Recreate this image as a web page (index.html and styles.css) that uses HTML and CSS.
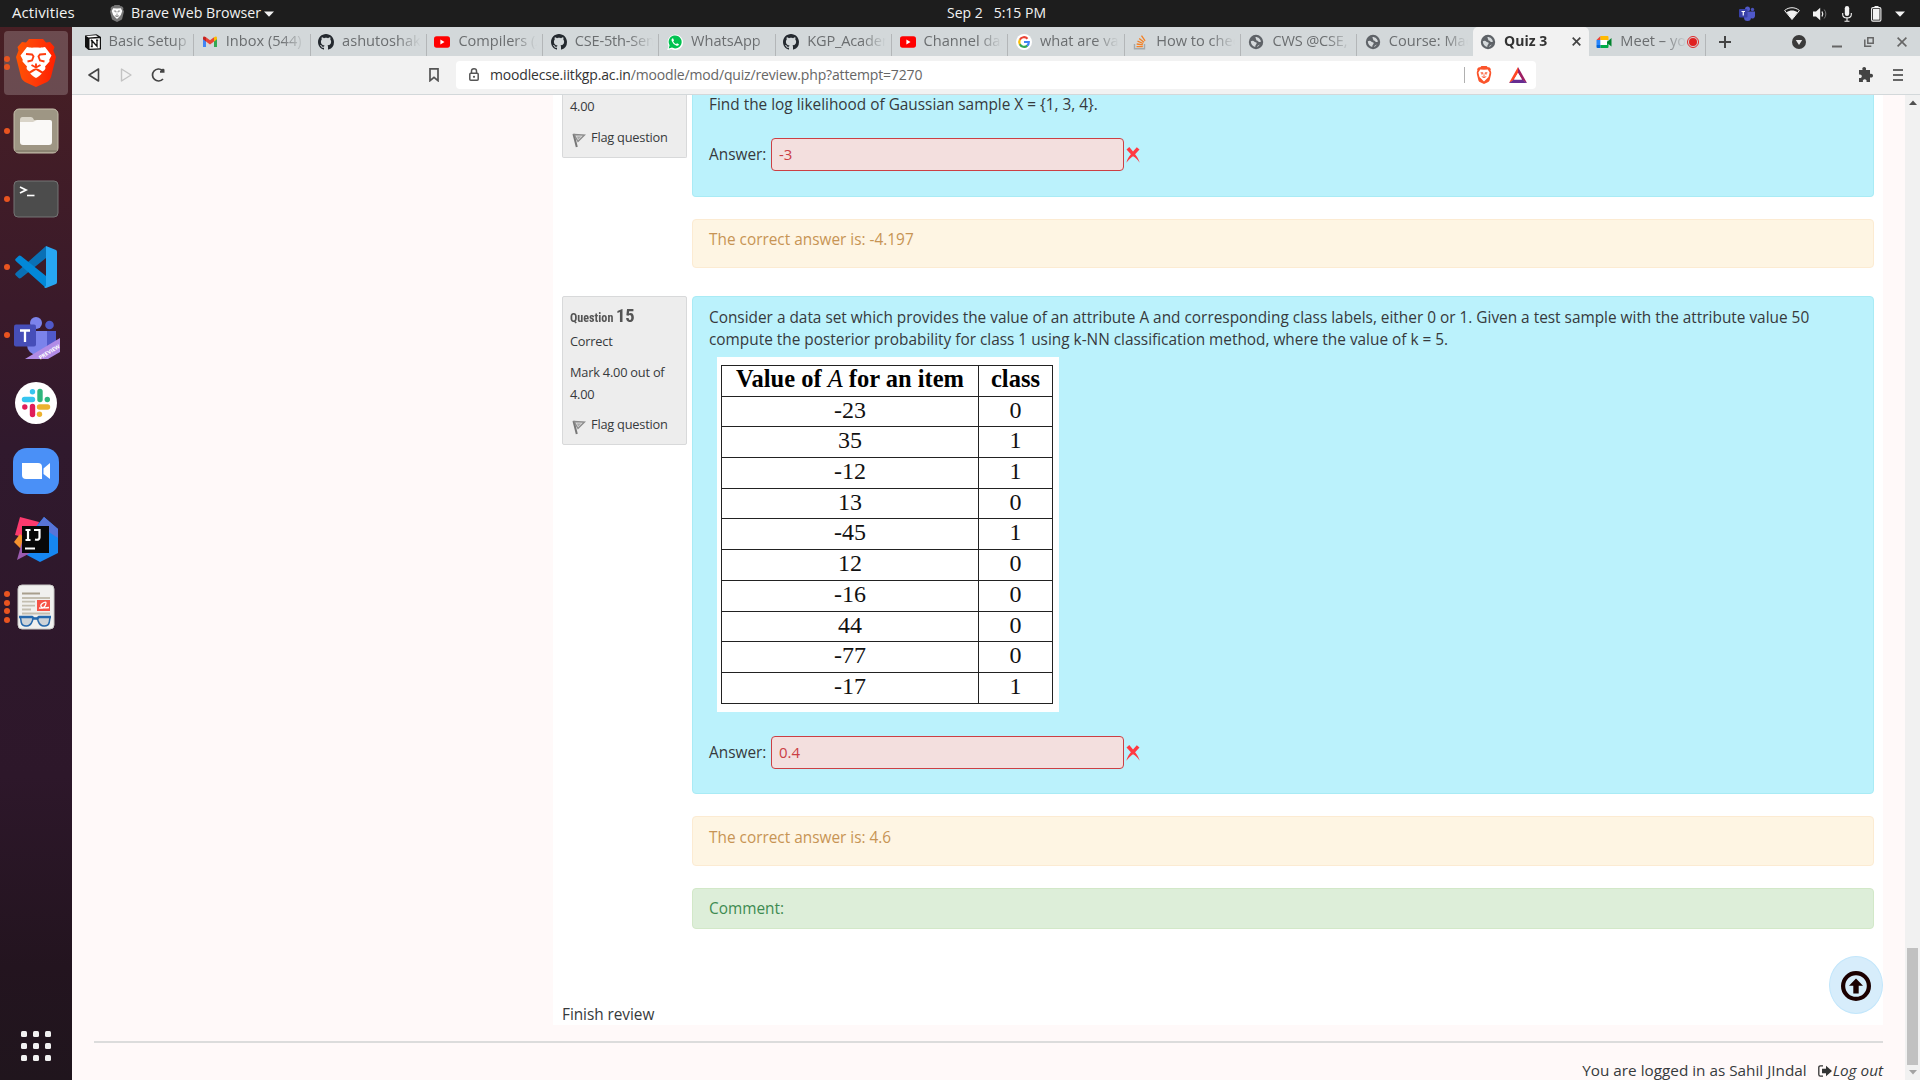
FILE: index.html
```html
<!DOCTYPE html>
<html lang="en">
<head>
<meta charset="utf-8">
<title>Quiz 3</title>
<link rel="stylesheet" href="styles.css">
</head>
<body>
<svg class="defs" width="0" height="0" aria-hidden="true">
  <defs>
    <linearGradient id="braveFill" x1="0" x2="1" y1="0.2" y2="0.3"><stop offset="0" stop-color="#ff5500"/><stop offset="0.45" stop-color="#ff4009"/><stop offset="1" stop-color="#ff2000"/></linearGradient>
    <symbol id="globe" viewBox="0 0 16 16"><circle cx="8" cy="8" r="7.2" fill="#5f6368"/><path d="M2.800 7.300c1.200-1 3-.8 3.400.2s2.600.3 2.500 1.800-1.400 1.200-1.500 3.600c-2.500-.3-4.400-2.600-4.400-5.600zM7.500 2.900c-.3 1.500 1 1.900.7 2.800s1.600.6 1.900 1.600 1.500.7 2.800.4c-.2-2.600-2.500-4.900-5.400-4.800zM9 12.900c.3-1.600 1.800-1.400 2.600-2.700-.3 1.400-1.400 2.300-2.600 2.700z" fill="#d5d9db"/></symbol>
    <symbol id="github" viewBox="0 0 16 16"><path fill="#24292f" d="M8 0C3.580 0 0 3.580 0 8c0 3.540 2.290 6.530 5.470 7.590.4.070.55-.17.55-.38 0-.19-.01-.82-.01-1.490-2.010.37-2.530-.49-2.690-.94-.09-.23-.48-.94-.82-1.130-.28-.15-.68-.52-.01-.53.63-.01 1.080.58 1.230.82.72 1.210 1.870.87 2.330.66.07-.52.28-.87.51-1.070-1.780-.2-3.640-.89-3.640-3.950 0-.87.31-1.590.82-2.150-.08-.2-.36-1.020.08-2.120 0 0 .67-.21 2.200.82.64-.18 1.320-.27 2-.27s1.360.09 2 .27c1.530-1.040 2.200-.82 2.200-.82.44 1.100.16 1.920.08 2.120.51.56.82 1.270.82 2.150 0 3.070-1.870 3.750-3.650 3.950.29.25.54.73.54 1.480 0 1.070-.01 1.930-.01 2.200 0 .21.15.46.55.38A8.010 8.010 0 0016 8c0-4.420-3.580-8-8-8z"/></symbol>
    <symbol id="youtube" viewBox="0 0 16 16"><rect y="2.300" width="16" height="11.400" rx="2.600" fill="#f00"/><path d="M6.400 5.600v4.800L10.500 8z" fill="#fff"/></symbol>
    <symbol id="flag" viewBox="0 0 14 16"><path d="M1.500 2l3.300 13" stroke="#777" stroke-width="2"/><path d="M2 2.500l10.500.5L6 9.500z" fill="#d8d8d8" stroke="#8b8b8b" stroke-width="1.300"/><path d="M5 4.500h4L6.200 7.500z" fill="#aaa"/></symbol>
    <symbol id="cross" viewBox="0 0 14 16"><path d="M.5 2.500L3.300 0 7 4.600 10.800.2l2.700 2.200-4.400 4.800c1.800 2.200 3.600 4.800 4.600 8.600C11.500 12.500 9.300 10.500 7 9.200 4.700 10.600 2.600 12.800.4 15.800 1.100 12 3 9.200 4.900 7.200z" fill="#ff3a42"/></symbol>
    <symbol id="lion" viewBox="0 0 40 48"><path d="M10 3.500L13 0h14l3 3.500 4-.5 4.500 5-1.200 3.500L40 18l-5 20c-1 3-3 4.500-5 5.500L20 48l-10-4.500C7.500 42 6 41 5 38L0 18l2.500-6.500L1.500 8 6 3z"/></symbol>
    <symbol id="lionface" viewBox="0 0 40 48"><path fill="#fff" d="M11 8c4 1 6 .5 9 .5s5 .5 9-.5l6.500 8.500-2.200 4 .2 2-4.500 5c1 1.500.5 3.500-2.500 5-2-1.500-4-3-6.500-3s-4.500 1.500-6.500 3c-3-1.500-3.500-3.500-2.500-5l-4.500-5 .2-2-2.200-4z"/><path fill="#fff" d="M20 31l5.800 3.500c-2 2.200-4 3.600-5.800 4.500-1.800-.9-3.800-2.300-5.800-4.500z"/><path d="M10 15l6 .5 1.500 2-1.500 4-4.500 1M30 15l-6 .5-1.500 2 1.500 4 4.500 1M15.500 26l4.500 2.500 4.500-2.500M20 24.500v4" fill="none" stroke="#ff3d10" stroke-width="1.900"/></symbol>
  </defs>
</svg>

<header class="topbar">
  <span class="activities">Activities</span>
  <svg class="app-icon" width="14" height="17" viewBox="0 0 40 48"><use href="#lion" fill="#777"/><path d="M9 9l11 1 11-1 4 8-4 11-5 6-6 6-6-6-5-6-4-11z" fill="#fff"/><path d="M11 17h6v4M29 17h-6v4M14 30l6 3 6-3M20 24v8" fill="none" stroke="#777" stroke-width="2.400"/></svg>
  <span class="app-name">Brave Web Browser</span>
  <svg class="caret" width="10" height="6"><path d="M0 .5h10L5 5.700z" fill="#f2f2f2"/></svg>
  <span class="clock">Sep 2&nbsp;&nbsp; 5:15 PM</span>
  <div class="tray">
    <svg width="16" height="15" viewBox="0 0 16 15"><circle cx="8.500" cy="3" r="2.500" fill="#5059c9"/><circle cx="13.500" cy="3.500" r="1.700" fill="#4b53bc"/><path d="M5 5.500h7v6a3.500 3.500 0 0 1-7 0zM12 5.500h4V10a2.500 2.500 0 0 1-4 2z" fill="#5059c9"/><rect y="3" width="8.500" height="8.500" rx="1" fill="#3940a8"/><path d="M2.500 5.500h3.500M4.250 5.500V9.500" stroke="#fff" stroke-width="1.200"/></svg>
    <svg class="wifi" width="16" height="14" viewBox="0 0 16 14"><path d="M.6 3.500C5-.2 11-.2 15.400 3.500L8 12.500z" fill="none" stroke="#f2f2f2"/><path d="M2.500 5.300c3.500-2.300 7.500-2.300 11 0L8 12.500z" fill="#f2f2f2"/></svg>
    <svg class="speaker" width="15" height="14" viewBox="0 0 15 14"><path d="M0 4.500h3L7.200.8v12.400L3 9.500H0z" fill="#f2f2f2"/><path d="M9 4.500q1.500 2.500 0 5" fill="none" stroke="#eee" stroke-width="1.300"/><path d="M11.200 2.500q3.300 4.500 0 9" fill="none" stroke="#777"/></svg>
    <svg class="mic" width="10" height="16" viewBox="0 0 10 16"><rect x="2.800" width="4.400" height="10" rx="2.200" fill="#f2f2f2"/><path d="M.7 7v1.500c0 4.500 8.600 4.500 8.600 0V7M5 12v3M2.500 15.300h5" fill="none" stroke="#f2f2f2" stroke-width="1.100"/></svg>
    <svg class="battery" width="11" height="16" viewBox="0 0 11 16"><path d="M3.500 0h4v2h-4z" fill="#f2f2f2"/><rect x=".6" y="1.600" width="9.300" height="13.500" rx="1.300" fill="none" stroke="#f2f2f2" stroke-width="1.100"/><path d="M2 3h6.500v10.700H2z" fill="#f2f2f2"/></svg>
    <svg class="tray-caret" width="10" height="6"><path d="M0 .5h10L5 5.700z" fill="#f2f2f2"/></svg>
  </div>
</header>

<div class="desktop">
  <aside class="dock">
    <div class="slot active">
      <div class="dots"><i></i><i></i></div>
      <svg width="40" height="48" viewBox="0 0 40 48"><use href="#lion" fill="url(#braveFill)"/><use href="#lionface"/></svg>
    </div>
    <div class="slot">
      <div class="dots"><i></i></div>
      <svg width="46" height="46" viewBox="0 0 46 46"><rect x="1" y="1" width="44" height="44" rx="5" fill="#9e9684" stroke="#c6bfac"/><rect x="2" y="42" width="42" height="2" rx="1" fill="#8b8372"/><path d="M7 12q0-3 2.500-3H18q2 0 3 3h15v5H7z" fill="#d9d4c8"/><path d="M7 14h13l4-2h13q2 0 2 2v20q0 3-3 3H10q-3 0-3-3z" fill="#faf9f7"/></svg>
    </div>
    <div class="slot">
      <div class="dots"><i></i></div>
      <svg width="46" height="38" viewBox="0 0 46 38"><rect x="1" y="1" width="44" height="36" rx="4" fill="#4c4c4c" stroke="#747474"/><path d="M7 7l6 3-6 3" fill="none" stroke="#fff" stroke-width="1.800"/><path d="M14 15.500h7.500" stroke="#fff" stroke-width="1.600"/></svg>
    </div>
    <div class="slot">
      <div class="dots"><i></i></div>
      <svg width="42" height="42" viewBox="0 0 42 42"><path d="M31 0v12L6 32q-1.500 1-3-.5L.7 29.300Q-.5 28 1 26.700z" fill="#0a70b5"/><path d="M31 42V30L6 10q-1.500-1-3 .5L.7 12.700Q-.5 14 1 15.300z" fill="#0288d8"/><path d="M31 0l10 4q1 .5 1 2v30q0 1.500-1 2l-10 4q-1 0-2-1l2-1z" fill="#27a6f2"/></svg>
    </div>
    <div class="slot">
      <div class="dots"><i></i></div>
      <svg class="teams" width="46" height="44" viewBox="0 0 46 44"><circle cx="22" cy="7" r="6" fill="#7b83eb"/><circle cx="35.500" cy="9" r="4.300" fill="#5059c9"/><path d="M28 15h14v13a8 8 0 0 1-14 5z" fill="#5059c9"/><path d="M13 15h20v14a10 10 0 0 1-20 0z" fill="#7b83eb"/><rect y="8.500" width="22" height="22" rx="2" fill="#464eb8"/><path d="M6 14.500h10M11 14.500V26" stroke="#fff" stroke-width="2.300"/><path d="M11 43L46 22v14L34 43z" fill="#b18be6"/><text x="-11.500" y="2" transform="translate(35 36) rotate(-31)" font-size="5.400" font-weight="700" font-family="Open Sans, sans-serif" fill="#fff">PREVIEW</text></svg>
    </div>
    <div class="slot">
      <svg width="42" height="42" viewBox="0 0 42 42"><circle cx="21" cy="21" r="21" fill="#fff"/><g stroke-width="5.400" stroke-linecap="round"><path d="M9.500 17.500h8" stroke="#36c5f0"/><path d="M17.500 9.800v0" stroke="#36c5f0"/><path d="M25 9.500v8" stroke="#2eb67d"/><path d="M32.300 17.500v0" stroke="#2eb67d"/><path d="M24.500 25h8" stroke="#ecb22e"/><path d="M24.500 32.300v0" stroke="#ecb22e"/><path d="M17.500 24.500v8" stroke="#e01e5a"/><path d="M9.800 25v0" stroke="#e01e5a"/></g></svg>
    </div>
    <div class="slot">
      <svg width="46" height="46" viewBox="0 0 46 46"><rect width="46" height="46" rx="14" fill="#4a90f7"/><path d="M9 15h16q4 0 4 4v12H13q-4 0-4-4z" fill="#fff"/><path d="M30.500 20.500L37 15v16l-6.500-5z" fill="#fff"/></svg>
    </div>
    <div class="slot">
      <svg width="46" height="46" viewBox="0 0 46 46"><path d="M7 1l19 5-4 18-20-5z" fill="#fc3a6e"/><path d="M7 18l9 8-6 9-9-9z" fill="#f5922f"/><path d="M31 1l14 12v24L27 46 12 38l8-24z" fill="#1687f2"/><path d="M25 9l6-8 14 12v9z" fill="#5874d8"/><path d="M9 26l12 9-17 9z" fill="#9b5bb0"/><rect x="9" y="10" width="27" height="27" fill="#080808"/><path d="M12.500 14h5M15 14v9.500M12.500 24h5M21 14h5.500v7.500q0 3-4.500 2" fill="none" stroke="#fff" stroke-width="2.200"/><path d="M12 32.500h10" stroke="#fff" stroke-width="2"/></svg>
    </div>
    <div class="slot">
      <div class="dots"><i></i><i></i><i></i><i></i></div>
      <svg width="38" height="46" viewBox="0 0 38 46"><rect x="1" y="1" width="36" height="44" rx="4" fill="#f0f0ee" stroke="#c9c9c7"/><path d="M5 9.500h18" stroke="#a89f8d" stroke-width="2"/><path d="M5 14h28M5 17.700h13M5 21.700h13M5 25.500h9M5 29.500h28" stroke="#c3beb0" stroke-width="1.800"/><rect x="20" y="16" width="13" height="11" fill="#f55347"/><path d="M22 24q5 1 6.500-3t-1.500-2.500q-4 2-3 4t8 1" fill="none" stroke="#fff" stroke-width="1.300"/><path d="M3 33l.8 5q.7 4.500 5.500 4.500T16 37l1-2h2l1 2q1.500 5.500 6.300 5.500t5.500-4.500l.8-5" fill="#c4ccd2" fill-opacity=".8"/><path d="M2 33h13l2 1.500h3L22 33h12" fill="none" stroke="#2569ad" stroke-width="2.400"/><path d="M3.500 33.500l.8 5q.7 3.500 5 3.500t6-5l.7-2.500M33 33.500l-.8 5q-.7 3.500-5 3.500t-6-5l-.7-2.500" fill="none" stroke="#2569ad" stroke-width="1.500"/></svg>
    </div>
    <svg class="apps" width="30" height="30" viewBox="0 0 30 30" fill="#f1f1f1"><rect width="6" height="6" rx="1.500"/><rect x="12" width="6" height="6" rx="1.500"/><rect x="24" width="6" height="6" rx="1.500"/><rect y="12" width="6" height="6" rx="1.500"/><rect x="12" y="12" width="6" height="6" rx="1.500"/><rect x="24" y="12" width="6" height="6" rx="1.500"/><rect y="24" width="6" height="6" rx="1.500"/><rect x="12" y="24" width="6" height="6" rx="1.500"/><rect x="24" y="24" width="6" height="6" rx="1.500"/></svg>
  </aside>

  <section class="browser">
    <div class="tabstrip">
      <div class="tab first"><svg class="fav" viewBox="0 0 16 16"><path d="M0 1.500L11.500.3 16 3v12.500l-12.500.5L0 13z" fill="#111"/><path d="M1.300 2l9.700-.8L13 2.700l-9.500.7zM4.500 4.800l10.300-.6v10L4.500 14.700z" fill="#fff"/><path d="M7 12.500V6.700l5 5.600V6.300M5.800 6.700h2M11 6.200h2.200M5.800 12.500h2" fill="none" stroke="#111" stroke-width="1.300"/></svg><span class="label">Basic Setup</span></div>
      <div class="tab"><svg class="fav" viewBox="0 0 16 16"><path d="M1 3.500V13h3V7z" fill="#4285f4"/><path d="M12 7v6h3V3.500z" fill="#34a853"/><path d="M4 3.300V7.500l4 3 4-3V3.300l-4 3z" fill="#ea4335"/><path d="M1 4q0-2 2-1.300l1 .6v4.200L1 5.300z" fill="#c5221f"/><path d="M15 4q0-2-2-1.300l-1 .6v4.200l3-2.200z" fill="#fbbc04"/></svg><span class="label">Inbox (544) -</span></div>
      <div class="tab"><svg class="fav"><use href="#github"/></svg><span class="label">ashutoshak</span></div>
      <div class="tab"><svg class="fav"><use href="#youtube"/></svg><span class="label">Compilers (A</span></div>
      <div class="tab"><svg class="fav"><use href="#github"/></svg><span class="label tight">CSE-5th-Sem</span></div>
      <div class="tab"><svg class="fav" viewBox="0 0 16 16"><path d="M.3 15.900l1.200-4A7.700 7.700 0 1 1 4.500 15z" fill="#fff"/><path d="M1.700 14.500l.9-3.200a6.500 6.500 0 1 1 2.400 2.300z" fill="#00c250"/><path d="M5.500 4.300q-1.500 1-.8 2.700 1.300 3.500 4.800 4.700 1.800.5 2.500-1.400l-2-1.100-1 1Q7 9.300 6.200 7.500l.8-1-.8-2.100z" fill="#fff"/></svg><span class="label plain">WhatsApp</span></div>
      <div class="tab"><svg class="fav"><use href="#github"/></svg><span class="label tight">KGP_Academ</span></div>
      <div class="tab"><svg class="fav"><use href="#youtube"/></svg><span class="label">Channel das</span></div>
      <div class="tab"><svg class="fav" viewBox="0 0 16 16"><circle cx="8" cy="8" r="8" fill="#fff"/><g fill="none" stroke-width="2.200"><path d="M11.500 4.700A4.800 4.800 0 0 0 3.800 5.800" stroke="#ea4335"/><path d="M3.900 5.600a4.800 4.800 0 0 0 0 4.800" stroke="#fbbc05"/><path d="M3.800 10.200a4.800 4.800 0 0 0 7.500 1.400" stroke="#34a853"/><path d="M11.200 11.700A4.800 4.800 0 0 0 12.800 8H8" stroke="#4285f4"/></g></svg><span class="label">what are va</span></div>
      <div class="tab"><svg class="fav" viewBox="0 0 16 16"><path d="M2.500 10v4.800h10V10" fill="none" stroke="#a5a9ab" stroke-width="1.400"/><path d="M4.500 12.700h6.300M4.700 10l6.200.9M5.500 7.200l5.700 2.300M7.200 4.400l4.800 3.900M9.500 1.700l3.600 5.200" stroke="#f48024" stroke-width="1.300"/></svg><span class="label">How to chec</span></div>
      <div class="tab"><svg class="fav"><use href="#globe"/></svg><span class="label tight">CWS @CSE,</span></div>
      <div class="tab"><svg class="fav"><use href="#globe"/></svg><span class="label">Course: Mac</span></div>
      <div class="tab current"><svg class="fav"><use href="#globe"/></svg><span class="label plain">Quiz 3</span><svg class="tab-close" width="9" height="9" viewBox="0 0 9 9"><path d="M.7.7l7.600 7.600M8.300.7L.7 8.300" stroke="#444" stroke-width="1.700"/></svg></div>
      <div class="tab last"><svg class="fav" viewBox="0 0 16 16"><path d="M.5 6L4.500 2v4z" fill="#ea4335"/><path d="M.5 6h4v5h-4z" fill="#2684fc"/><path d="M.5 11h4v3h-3q-1 0-1-1z" fill="#0066da"/><path d="M4.500 2h7q1 0 1 1v3h-8z" fill="#ffba00"/><path d="M4.500 11H11V8l1.500-1.500V13q0 1-1 1h-7z" fill="#00ac47"/><path d="M11 8l4.500-4v8.500L11 9z" fill="#00832d"/><path d="M4.500 6H11v5H4.500z" fill="#fff"/></svg><span class="label">Meet – yo</span><svg class="rec" width="12" height="12" viewBox="0 0 12 12"><circle cx="6" cy="6" r="5.500" fill="none" stroke="#e02828"/><circle cx="6" cy="6" r="4" fill="#e02020"/></svg></div>
      <div class="strip-controls">
        <svg width="12" height="12"><path d="M6 0v12M0 6h12" stroke="#444" stroke-width="2"/></svg>
        <svg class="search-tabs" width="14" height="14" viewBox="0 0 14 14"><circle cx="7" cy="7" r="7" fill="#3a3a3a"/><path d="M3.800 5h6.400L7 10z" fill="#e8e8e8"/></svg>
        <svg class="min" width="10" height="12"><path d="M0 10.500h10" stroke="#666" stroke-width="2"/></svg>
        <svg class="restore" width="10" height="10" viewBox="0 0 10 10"><path d="M3.800.8h5.400v5.400H3.800zM.8 2.500v6.700h6.500" fill="none" stroke="#666" stroke-width="1.500"/></svg>
        <svg class="close" width="10" height="10" viewBox="0 0 10 10"><path d="M.6.6l8.800 8.800M9.400.6L.6 9.400" stroke="#666" stroke-width="1.600"/></svg>
      </div>
    </div>

    <div class="toolbar">
      <svg width="12" height="14" viewBox="0 0 12 14"><path d="M10.500 1v12L1 7z" fill="none" stroke="#444" stroke-width="1.600" stroke-linejoin="round"/></svg>
      <svg class="forward" width="12" height="14" viewBox="0 0 12 14"><path d="M1.500 1v12L11 7z" fill="none" stroke="#c3c3c3" stroke-width="1.400" stroke-linejoin="round"/></svg>
      <svg class="reload" width="15" height="14" viewBox="0 0 15 14"><path d="M12 11A6 6 0 1 1 11.500 2.500" fill="none" stroke="#444" stroke-width="1.700"/><path d="M9 4.700V3l3-2.500 1.500 1v3.200z" fill="#444"/></svg>
      <svg class="bookmark" width="10" height="14" viewBox="0 0 10 14"><path d="M1 .9h8v11.800L5 9.400l-4 3.300z" fill="none" stroke="#555" stroke-width="1.700"/></svg>
      <div class="urlbox">
        <svg width="10" height="13" viewBox="0 0 10 13"><path d="M2.500 5.500V3q0-2.200 2.500-2.200T7.500 3v2.500" fill="none" stroke="#555" stroke-width="1.500"/><rect x=".8" y="5.300" width="8.400" height="6.900" rx="1" fill="none" stroke="#555" stroke-width="1.500"/><circle cx="5" cy="8.800" r="1.100" fill="#555"/></svg>
        <span class="url">moodlecse.iitkgp.ac.in<span>/moodle/mod/quiz/review.php?attempt=7270</span></span>
        <i class="bar"></i>
        <svg class="shield" width="16" height="18" viewBox="0 0 40 48"><use href="#lion" fill="#fb542b"/><path d="M10 9l10 1 10-1 5 8-3 12-12 12L8 29 5 17z" fill="#fff"/><path d="M11 18h6v3h-5M29 18h-6v3h5M14 28l6 3 6-3M20 22v9" fill="none" stroke="#fb542b" stroke-width="2.400"/></svg>
        <svg class="bat" width="18" height="16" viewBox="0 0 18 16"><path d="M9 0L0 16l5-3 4-7z" fill="#ff4724"/><path d="M9 0l9 16-5-3-4-7z" fill="#9e1f63"/><path d="M0 16h18l-5-3.500H5z" fill="#662d91"/><path d="M9 6l4 6.500H5z" fill="#fff"/></svg>
      </div>
      <svg class="puzzle" width="15" height="15" viewBox="0 0 15 15"><path d="M1 3h3.500C3.800.8 5 0 6.200 0s2.400.8 1.700 3H12v4c2-.6 3 .5 3 1.700S14 11 12 10.400V15H8.500c.6-1.800-.6-2.800-1.800-2.800S4.300 13.200 5 15H1v-4c2 .5 2.800-.6 2.800-1.700S3 7 1 7.500z" fill="#444"/></svg>
      <svg class="menu" width="10" height="12"><path d="M0 1h10M0 6h10M0 11h10" stroke="#666" stroke-width="2"/></svg>
    </div>

    <div class="viewport">
      <div class="page">
        <main class="main">
          <article class="question">
            <div class="info cut">
              <p class="mark-tail">4.00</p>
              <p class="flag"><svg width="14" height="16"><use href="#flag"/></svg>Flag question</p>
            </div>
            <div class="content">
              <div class="formulation cut">
                <p>Find the log likelihood of Gaussian sample X = {1, 3, 4}.</p>
                <div class="answer"><label>Answer:</label><div class="input">-3</div><svg width="14" height="16"><use href="#cross"/></svg></div>
              </div>
              <div class="feedback">The correct answer is: -4.197</div>
            </div>
          </article>
          <article class="question second">
            <div class="info">
              <h3><span class="qword">Question</span> <span class="qno">15</span></h3>
              <p class="state">Correct</p>
              <p class="mark">Mark 4.00 out of 4.00</p>
              <p class="flag"><svg width="14" height="16"><use href="#flag"/></svg>Flag question</p>
            </div>
            <div class="content">
              <div class="formulation">
                <p class="qtext">Consider a data set which provides the value of an attribute A and corresponding class labels, either 0 or 1. Given a test sample with the attribute value 50<br>compute the posterior probability for class 1 using k-NN classification method, where the value of k = 5.</p>
                <div class="figure">
                  <div class="rows">
                    <div class="row head"><span>Value of <em>A</em> for an item</span><span>class</span></div>
                    <div class="row"><span>-23</span><span>0</span></div>
                    <div class="row"><span>35</span><span>1</span></div>
                    <div class="row"><span>-12</span><span>1</span></div>
                    <div class="row"><span>13</span><span>0</span></div>
                    <div class="row"><span>-45</span><span>1</span></div>
                    <div class="row"><span>12</span><span>0</span></div>
                    <div class="row"><span>-16</span><span>0</span></div>
                    <div class="row"><span>44</span><span>0</span></div>
                    <div class="row"><span>-77</span><span>0</span></div>
                    <div class="row"><span>-17</span><span>1</span></div>
                  </div>
                </div>
                <div class="answer"><label>Answer:</label><div class="input">0.4</div><svg width="14" height="16"><use href="#cross"/></svg></div>
              </div>
              <div class="feedback tall">The correct answer is: 4.6</div>
              <div class="comment">Comment:</div>
            </div>
          </article>
          <p class="finish">Finish review</p>
          <div class="to-top"><svg width="30" height="30" viewBox="0 0 30 30"><circle cx="15" cy="15" r="12.900" fill="none" stroke="#1b0000" stroke-width="4.200"/><path d="M15 7.500l7 7.300h-4.300V22.500h-5.400v-7.700H8z" fill="#1b0000"/></svg></div>
        </main>
        <footer class="footer">
          <span class="login">You are logged in as Sahil JIndal</span>
          <svg width="14" height="12" viewBox="0 0 14 12"><path d="M5 .8H2.500Q.8.800.8 2.500v7q0 1.700 1.700 1.700H5" fill="none" stroke="#333" stroke-width="1.300"/><path d="M4 3.800h4V.8L14 6l-6 5.200v-3H4z" fill="#333"/></svg>
          <em class="logout">Log out</em>
        </footer>
      </div>
      <div class="scrollbar">
        <svg width="8" height="5"><path d="M0 5h8L4 .5z" fill="#505050"/></svg>
        <div class="thumb"></div>
        <svg width="8" height="5"><path d="M0 0h8L4 4.500z" fill="#a3a3a3"/></svg>
      </div>
    </div>
  </section>
</div>
</body>
</html>
```
FILE: styles.css
```css
* { box-sizing: border-box; }
body {
  margin: 0;
  width: 1920px;
  height: 1080px;
  overflow: hidden;
  font-family: "Open Sans", "Noto Sans", sans-serif;
  font-size: 15.380px;
  color: #373a3c;
}
p, h3 { margin: 0; }
svg { display: block; flex: none; }
.defs { position: absolute; }

/* system bar */
.topbar {
  display: grid;
  grid-template-columns: 98px 21px 133px 683px 1fr auto;
  align-items: center;
  height: 27px;
  padding: 0 15px 0 12px;
  background: #1d1d1d;
  color: #f2f2f2;
  font-size: 14px;
  line-height: 25px;
  white-space: pre;
}
.topbar > span { height: 27px; }
.activities { font-size: 15px; letter-spacing: .1px; }
.app-name { font-size: 14.200px; }
.tray { display: flex; align-items: center; }
.wifi { margin-left: 29px; }
.speaker { margin-left: 13px; }
.mic { margin-left: 14px; }
.battery { margin-left: 19px; }
.tray-caret { margin-left: 13px; }

.desktop { display: flex; height: 1053px; }

/* launcher */
.dock {
  display: flex;
  flex-direction: column;
  width: 72px;
  padding: 2px 4px 0;
  background: linear-gradient(#481f24 0, #3a1a2a 280px, #30192d 420px, #2d172a 750px, #23141f 940px, #20151d 100%);
}
.slot {
  display: flex;
  align-items: center;
  justify-content: center;
  position: relative;
  height: 64px;
  margin: 2px 0;
  border-radius: 4px;
}
.active { background: rgba(255, 255, 255, .2); }
.teams { margin: 5px 0 0 2px; }
.dots {
  position: absolute;
  left: 0;
  top: 0;
  height: 64px;
  display: flex;
  flex-direction: column;
  justify-content: center;
  gap: 2.700px;
}
.dots i { width: 6px; height: 6px; border-radius: 50%; background: #e95420; }
.apps { margin: auto 0 19px 17px; }

/* browser chrome */
.browser { display: flex; flex-direction: column; width: 1848px; }
.tabstrip { display: flex; height: 29px; padding-left: 5px; background: #d3d8da; }
.tab {
  display: flex;
  align-items: center;
  position: relative;
  width: 116.300px;
  height: 29px;
  padding: 0 5px 0 8.500px;
  color: #6b6e70;
  font-size: 14.600px;
  white-space: nowrap;
}
.first, .current, .last { padding-left: 7.500px; }
.tab::after {
  content: "";
  position: absolute;
  right: -1px;
  top: 7px;
  width: 1px;
  height: 22px;
  background: #b3b6b8;
}
.fav { width: 16px; height: 16px; margin-right: 8px; }
.label {
  flex: 1;
  min-width: 0;
  height: 29px;
  line-height: 27px;
  overflow: hidden;
  -webkit-mask-image: linear-gradient(90deg, #000 calc(100% - 24px), transparent);
  mask-image: linear-gradient(90deg, #000 calc(100% - 24px), transparent);
}
.first .label, .plain { -webkit-mask-image: linear-gradient(90deg, #000 calc(100% - 14px), rgba(0, 0, 0, .2)); mask-image: linear-gradient(90deg, #000 calc(100% - 14px), rgba(0, 0, 0, .2)); }
.tight { letter-spacing: -0.2px; }
.current { background: #f2f2f2; border-radius: 5px 5px 0 0; font-weight: 700; color: #333; font-size: 14px; }
.current::after, .tab:nth-child(12)::after { display: none; }
.tab-close { margin-right: 3px; }
.rec { margin-right: 1px; }
.strip-controls { display: flex; align-items: center; margin-left: 14px; }
.search-tabs { margin-left: 61px; }
.min { margin-left: 26px; }
.restore { margin-left: 22px; }
.close { margin-left: 23px; }

.toolbar {
  display: flex;
  align-items: center;
  height: 39px;
  padding: 0 17px 1px 16px;
  border-bottom: 1px solid #d3d8da;
  background: #f2f2f2;
}
.forward { margin-left: 20px; }
.reload { margin-left: 19px; }
.bookmark { margin-left: 263px; }
.urlbox {
  display: flex;
  align-items: center;
  width: 1080px;
  height: 28px;
  margin-left: 17px;
  padding: 0 9px 0 13px;
  border-radius: 4px;
  background: #fff;
}
.url { margin-left: 11px; font-size: 14px; letter-spacing: -0.160px; color: #333; }
.url span { color: #666; }
.bar { width: 1px; height: 16px; margin-left: auto; background: #b0b0b0; }
.shield { margin-left: 11px; }
.bat { margin-left: 17px; }
.puzzle { margin-left: auto; }
.menu { margin-left: 20px; }

/* page */
.viewport { display: flex; height: 985px; overflow: hidden; }
.page { width: 1833px; padding: 0 22px; background: #fff9f9; }
.main {
  position: relative;
  width: 1330px;
  height: 930px;
  margin-left: 459px;
  padding: 0 9px;
  background: #fff;
}
.question { display: flex; align-items: flex-start; gap: 5px; }
.second { margin-top: 28px; }
.info {
  width: 125px;
  height: 149px;
  padding: 8px 7px;
  border: 1px solid #d8d9da;
  border-radius: 2px;
  background: #ededed;
  font-size: 12.800px;
  letter-spacing: -0.220px;
  line-height: 22px;
}
.info.cut { height: 63px; padding-top: 0; border-top: 0; border-radius: 0 0 2px 2px; }
.flag { display: flex; align-items: center; gap: 5px; margin-top: 8px; }
.info.cut .flag { margin-top: 9px; }
.flag svg { margin: 5px 0 0 2px; }
.info h3 { display: flex; align-items: baseline; height: 22px; font-family: "Roboto Condensed", Roboto, sans-serif; color: #555; letter-spacing: 0; }
.qword { width: 46px; font-size: 12.500px; transform: scaleX(.97); transform-origin: 0 0; }
.qno { font-size: 18px; transform: scaleX(1.03); transform-origin: 0 0; }
.state { margin-top: 3px; }
.mark { margin-top: 9px; }
.content { width: 1182px; }
.formulation {
  height: 498px;
  padding: 10px 16px 24px;
  border: 1px solid #a9ebf5;
  border-radius: 4px;
  background: #bbf2fc;
}
.formulation.cut { height: 102px; padding-top: 0; border-top: 0; border-radius: 0 0 4px 4px; }
.formulation.cut p { height: 20px; line-height: 20px; }
.qtext { line-height: 22px; white-space: nowrap; }
.answer { display: flex; align-items: center; height: 33px; margin-top: 24px; }
.formulation.cut .answer { margin-top: 23px; }
.answer label { width: 62px; line-height: 33px; height: 33px; }
.answer svg { margin-left: 2px; }
.input {
  width: 353px;
  height: 33px;
  padding: 0 7px;
  border: 1px solid #cb4044;
  border-radius: 4px;
  background: #f3dfde;
  color: #cb4044;
  font-size: 15px;
  line-height: 31px;
}
.feedback, .comment {
  height: 49px;
  margin-top: 22px;
  padding: 9px 16px 0;
  border: 1px solid #fcebd2;
  border-radius: 4px;
  background: #fef5e3;
  color: #c79454;
  line-height: 22px;
}
.tall { height: 50px; padding-top: 10px; }
.comment { height: 41px; border-color: #d2e8c8; background: #ddeed9; color: #3e8b51; }

/* data table of the question */
.figure {
  width: 342px;
  height: 355px;
  margin: 6px 0 0 8px;
  padding: 8px 4px;
  background: #fff;
}
.rows { width: 332px; border: solid #222; border-width: 0 1px 1px; }
.row {
  display: grid;
  grid-template-columns: 256px 1fr;
  height: 30.700px;
  border-top: 1px solid #222;
  color: #111;
  font-family: "Liberation Serif", serif;
  font-size: 24px;
  line-height: 26px;
  text-align: center;
  white-space: nowrap;
}
.row span + span { border-left: 1px solid #222; }
.head { font-weight: 700; color: #000; font-size: 24.500px; }
.head em { font-weight: 400; }

.finish { margin-top: 75px; line-height: 22px; letter-spacing: -0.050px; }
.to-top {
  position: absolute;
  right: 0;
  bottom: 11px;
  display: flex;
  align-items: center;
  justify-content: center;
  width: 54px;
  height: 58px;
  padding-top: 2px;
  border: 1px solid #c2e6fb;
  border-radius: 50%;
  background: #d7edfb;
}
.footer {
  display: flex;
  align-items: center;
  justify-content: flex-end;
  margin-top: 16px;
  height: 41px;
  padding-top: 15px;
  border-top: 2px solid #dcdcdc;
  font-size: 15.300px;
  line-height: 22px;
}
.footer svg { margin: 1px 1px 0 11px; }
.scrollbar {
  display: flex;
  flex-direction: column;
  align-items: center;
  justify-content: space-between;
  width: 15px;
  padding: 5px 0;
  background: #f1f1f1;
}
.thumb { width: 11px; height: 117px; margin: auto 0 5px; background: #c1c1c1; }
```
